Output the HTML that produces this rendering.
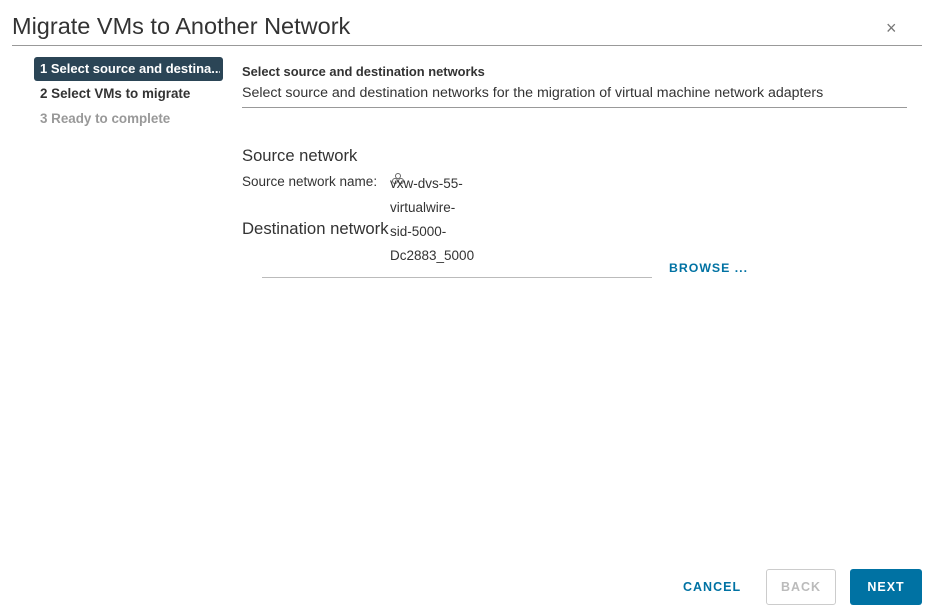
<!DOCTYPE html>
<html><head><style>
body{margin:0;width:936px;height:616px;background:#fff;font-family:"Liberation Sans",sans-serif;color:#333;position:relative;overflow:hidden}
.a{position:absolute;white-space:nowrap}
</style></head><body>
<div class="a" style="left:12px;top:13px;font-size:23.5px;color:#333">Migrate VMs to Another Network</div>
<div class="a" style="left:886px;top:18px;font-size:18px;color:#777">×</div>
<div class="a" style="left:12px;top:45px;width:910px;height:1px;background:#999"></div>
<div class="a" style="left:34px;top:57px;width:189px;height:24px;background:#2b4556;border-radius:3px"></div>
<div class="a" style="left:40px;top:61px;font-size:13px;font-weight:bold;color:#fff;width:180px;overflow:hidden">1 Select source and destina...</div>
<div class="a" style="left:40px;top:86px;font-size:13.4px;font-weight:bold;color:#333">2 Select VMs to migrate</div>
<div class="a" style="left:40px;top:111px;font-size:13.4px;font-weight:bold;color:#999">3 Ready to complete</div>
<div class="a" style="left:242px;top:64px;font-size:12.9px;font-weight:bold">Select source and destination networks</div>
<div class="a" style="left:242px;top:85px;font-size:14.2px">Select source and destination networks for the migration of virtual machine network adapters</div>
<div class="a" style="left:242px;top:107px;width:665px;height:1px;background:#999"></div>
<div class="a" style="left:242px;top:146px;font-size:16.6px">Source network</div>
<div class="a" style="left:242px;top:174px;font-size:13.5px">Source network name:</div>
<svg class="a" style="left:391px;top:172px" width="14" height="14" viewBox="0 0 14 14" fill="none" stroke="#666" stroke-width="1"><circle cx="7" cy="4" r="2.5"/><circle cx="4" cy="9" r="2.5"/><circle cx="10" cy="9" r="2.5"/></svg>
<div class="a" style="left:390px;top:172px;font-size:13.5px;line-height:24px">vxw-dvs-55-<br>virtualwire-<br>sid-5000-<br>Dc2883_5000</div>
<div class="a" style="left:242px;top:219px;font-size:16.7px">Destination network</div>
<div class="a" style="left:262px;top:277px;width:390px;height:1px;background:#bbb"></div>
<div class="a" style="left:669px;top:261px;font-size:12.3px;font-weight:bold;color:#0072a3;letter-spacing:1px">BROWSE ...</div>
<div class="a" style="left:683px;top:580px;font-size:12.5px;font-weight:bold;color:#0072a3;letter-spacing:1px">CANCEL</div>
<div class="a" style="left:766px;top:569px;width:70px;height:36px;border:1px solid #ccc;border-radius:3px;box-sizing:border-box;font-size:12.5px;font-weight:bold;color:#bbb;letter-spacing:1px;text-align:center;line-height:34px">BACK</div>
<div class="a" style="left:850px;top:569px;width:72px;height:36px;background:#0072a3;border-radius:3px;font-size:12.5px;font-weight:bold;color:#fff;letter-spacing:1px;text-align:center;line-height:36px">NEXT</div>
</body></html>
